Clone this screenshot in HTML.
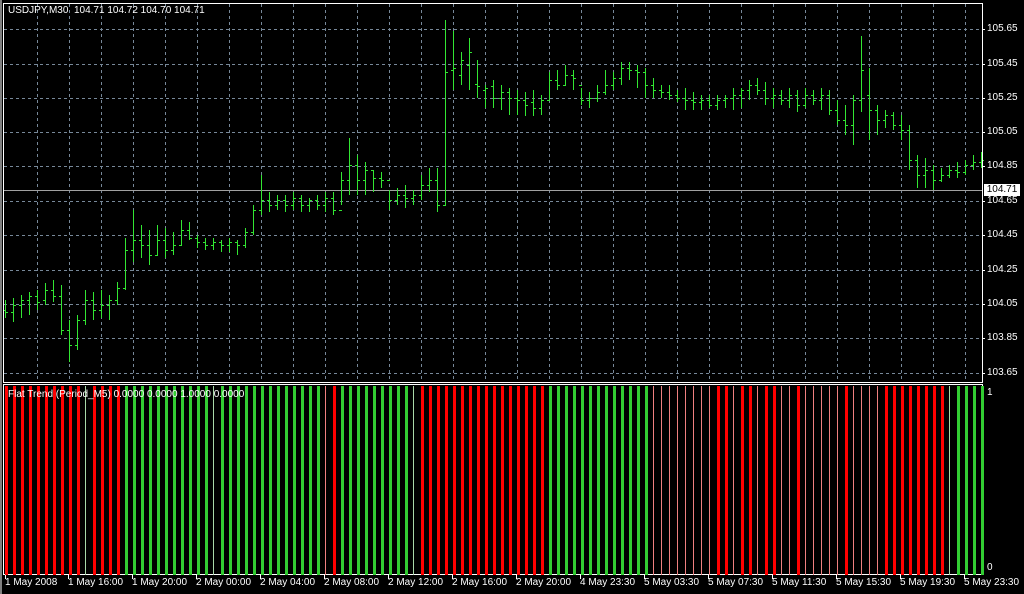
<!DOCTYPE html>
<html><head><meta charset="utf-8"><style>
body{margin:0;width:1024px;height:594px;background:#000;position:relative;overflow:hidden;font-family:"Liberation Sans",sans-serif;font-size:10px;color:#fff}
.a{position:absolute}
.r{position:absolute;top:386px;height:189px}
.R{background:repeating-linear-gradient(90deg,#f00 0 3px,transparent 3px 8px)}
.G{background:repeating-linear-gradient(90deg,#32cd32 0 3px,transparent 3px 8px)}
.P{background:repeating-linear-gradient(90deg,#f08080 0 1px,transparent 1px 8px)}
.T{background:repeating-linear-gradient(90deg,#a8d8a8 0 1px,transparent 1px 8px)}
.pl{position:absolute;left:987px;font-size:10px}
.bl{position:absolute;top:577px;font-size:10px}
</style></head><body>
<div class="a" style="left:0;top:0;width:2px;height:594px;background:#808080"></div>
<svg class="a" style="left:0;top:0" width="1024" height="594">
<g stroke="#778899" stroke-dasharray="3 3" stroke-width="1">
<path d="M37.5 4V382M69.5 4V382M101.5 4V382M133.5 4V382M165.5 4V382M197.5 4V382M229.5 4V382M261.5 4V382M293.5 4V382M325.5 4V382M357.5 4V382M389.5 4V382M421.5 4V382M453.5 4V382M485.5 4V382M517.5 4V382M549.5 4V382M581.5 4V382M613.5 4V382M645.5 4V382M677.5 4V382M709.5 4V382M741.5 4V382M773.5 4V382M805.5 4V382M837.5 4V382M869.5 4V382M901.5 4V382M933.5 4V382M965.5 4V382"/>
<path d="M4 29.5H982M4 64.5H982M4 98.5H982M4 132.5H982M4 166.5H982M4 201.5H982M4 235.5H982M4 270.5H982M4 304.5H982M4 338.5H982M4 373.5H982"/>
</g>
<path d="M4 190.5H982" stroke="#a0a0a0"/>
<g stroke="#32e632" stroke-width="1" fill="none">
<path d="M5.5 300V318M3 310.5h3M6 312.5h2M13.5 298V322M11 312.5h3M14 305.5h2M21.5 295V318M19 305.5h3M22 300.5h2M29.5 292V315M27 300.5h3M30 296.5h2M37.5 290V310M35 296.5h3M38 302.5h2M45.5 283V305M43 300.5h3M46 290.5h2M53.5 280V302M51 290.5h3M54 296.5h2M61.5 285V335M59 296.5h3M62 330.5h2M69.5 320V362M67 330.5h3M70 345.5h2M77.5 315V350M75 345.5h3M78 320.5h2M85.5 290V325M83 320.5h3M86 300.5h2M93.5 292V320M91 300.5h3M94 310.5h2M101.5 290V318M99 310.5h3M102 305.5h2M109.5 295V320M107 305.5h3M110 300.5h2M117.5 282V305M115 300.5h3M118 288.5h2M125.5 238V290M123 288.5h3M126 250.5h2M133.5 210V262M131 250.5h3M134 240.5h2M141.5 225V258M139 240.5h3M142 245.5h2M149.5 230V265M147 245.5h3M150 255.5h2M157.5 225V255M155 255.5h3M158 240.5h2M165.5 228V258M163 240.5h3M166 250.5h2M173.5 232V255M171 250.5h3M174 245.5h2M181.5 220V245M179 245.5h3M182 230.5h2M189.5 222V240M187 230.5h3M190 238.5h2M197.5 235V248M195 238.5h3M198 242.5h2M205.5 238V250M203 242.5h3M206 245.5h2M213.5 238V250M211 245.5h3M214 242.5h2M221.5 240V252M219 242.5h3M222 245.5h2M229.5 238V252M227 245.5h3M230 242.5h2M237.5 240V255M235 242.5h3M238 245.5h2M245.5 228V248M243 245.5h3M246 232.5h2M253.5 205V235M251 232.5h3M254 210.5h2M261.5 175V215M259 210.5h3M262 200.5h2M269.5 192V212M267 200.5h3M270 205.5h2M277.5 195V210M275 205.5h3M278 200.5h2M285.5 195V212M283 200.5h3M286 205.5h2M293.5 192V210M291 205.5h3M294 198.5h2M301.5 195V212M299 198.5h3M302 205.5h2M309.5 198V212M307 205.5h3M310 200.5h2M317.5 195V210M315 200.5h3M318 205.5h2M325.5 192V212M323 205.5h3M326 198.5h2M333.5 192V215M331 198.5h3M334 210.5h2M341.5 172V205M339 210.5h3M342 180.5h2M349.5 138V195M347 180.5h3M350 165.5h2M357.5 155V195M355 165.5h3M358 180.5h2M365.5 162V195M363 180.5h3M366 170.5h2M373.5 170V192M371 170.5h3M374 178.5h2M381.5 172V188M379 178.5h3M382 180.5h2M389.5 190V210M387 180.5h3M390 200.5h2M397.5 188V205M395 200.5h3M398 195.5h2M405.5 185V208M403 195.5h3M406 198.5h2M413.5 190V205M411 198.5h3M414 195.5h2M421.5 175V200M419 195.5h3M422 185.5h2M429.5 168V192M427 185.5h3M430 180.5h2M437.5 168V212M435 180.5h3M438 205.5h2M445.5 20V205M443 205.5h3M446 72.5h2M453.5 31V90M451 70.5h3M454 68.5h2M461.5 52V85M459 75.5h3M462 60.5h2M469.5 38V90M467 65.5h3M470 52.5h2M477.5 60V98M475 84.5h3M478 86.5h2M485.5 85V108M483 90.5h3M486 88.5h2M493.5 80V108M491 86.5h3M494 98.5h2M501.5 85V110M499 98.5h3M502 92.5h2M509.5 88V115M507 92.5h3M510 98.5h2M517.5 90V115M515 98.5h3M518 100.5h2M525.5 92V116M523 100.5h3M526 105.5h2M533.5 90V116M531 102.5h3M534 108.5h2M541.5 95V115M539 108.5h3M542 100.5h2M549.5 72V100M547 100.5h3M550 80.5h2M557.5 70V90M555 80.5h3M558 85.5h2M565.5 65V85M563 85.5h3M566 75.5h2M573.5 70V90M571 75.5h3M574 78.5h2M581.5 88V105M579 85.5h3M582 100.5h2M589.5 92V108M587 100.5h3M590 98.5h2M597.5 85V102M595 98.5h3M598 92.5h2M605.5 70V95M603 92.5h3M606 85.5h2M613.5 72V90M611 85.5h3M614 78.5h2M621.5 62V85M619 78.5h3M622 68.5h2M629.5 62V80M627 68.5h3M630 70.5h2M637.5 65V88M635 70.5h3M638 72.5h2M645.5 68V98M643 72.5h3M646 85.5h2M653.5 78V98M651 85.5h3M654 90.5h2M661.5 85V98M659 90.5h3M662 92.5h2M669.5 85V100M667 92.5h3M670 95.5h2M677.5 90V102M675 95.5h3M678 98.5h2M685.5 88V110M683 98.5h3M686 100.5h2M693.5 92V110M691 100.5h3M694 102.5h2M701.5 95V110M699 102.5h3M702 100.5h2M709.5 95V108M707 100.5h3M710 105.5h2M717.5 95V110M715 105.5h3M718 100.5h2M725.5 95V108M723 100.5h3M726 98.5h2M733.5 88V110M731 98.5h3M734 95.5h2M741.5 88V108M739 95.5h3M742 90.5h2M749.5 80V100M747 90.5h3M750 85.5h2M757.5 78V95M755 85.5h3M758 90.5h2M765.5 82V105M763 90.5h3M766 98.5h2M773.5 88V108M771 98.5h3M774 95.5h2M781.5 90V105M779 95.5h3M782 100.5h2M789.5 88V108M787 100.5h3M790 95.5h2M797.5 90V112M795 95.5h3M798 105.5h2M805.5 88V108M803 105.5h3M806 95.5h2M813.5 90V105M811 95.5h3M814 100.5h2M821.5 88V110M819 100.5h3M822 95.5h2M829.5 90V115M827 95.5h3M830 110.5h2M837.5 100V125M835 110.5h3M838 120.5h2M845.5 105V135M843 120.5h3M846 125.5h2M853.5 95V145M851 125.5h3M854 100.5h2M861.5 36V112M859 100.5h3M862 70.5h2M869.5 68V140M867 95.5h3M870 110.5h2M877.5 105V135M875 110.5h3M878 120.5h2M885.5 110V128M883 120.5h3M886 115.5h2M893.5 112V130M891 115.5h3M894 125.5h2M901.5 115V140M899 125.5h3M902 130.5h2M909.5 125V170M907 130.5h3M910 160.5h2M917.5 155V188M915 160.5h3M918 175.5h2M925.5 158V188M923 175.5h3M926 170.5h2M933.5 165V190M931 170.5h3M934 180.5h2M941.5 168V182M939 180.5h3M942 175.5h2M949.5 165V178M947 175.5h3M950 170.5h2M957.5 162V178M955 170.5h3M958 172.5h2M965.5 160V175M963 172.5h3M966 165.5h2M973.5 155V170M971 165.5h3M974 162.5h2M981.5 152V168M979 162.5h3M982 160.5h2"/>
</g>
<rect x="3.5" y="3.5" width="979" height="379" fill="none" stroke="#fff"/>
<rect x="3.5" y="384.5" width="979" height="190" fill="none" stroke="#fff"/>
<path d="M5.5 575V579M68.5 575V579M132.5 575V579M196.5 575V579M260.5 575V579M324.5 575V579M388.5 575V579M452.5 575V579M516.5 575V579M580.5 575V579M644.5 575V579M708.5 575V579M772.5 575V579M836.5 575V579M900.5 575V579M964.5 575V579" stroke="#fff"/>
<path d="M982 29.5h3M982 64.5h3M982 98.5h3M982 132.5h3M982 166.5h3M982 201.5h3M982 235.5h3M982 270.5h3M982 304.5h3M982 338.5h3M982 373.5h3" stroke="#fff"/>
</svg>
<div class="r R" style="left:5px;width:80px"></div>
<div class="r T" style="left:85px;width:8px"></div>
<div class="r R" style="left:93px;width:32px"></div>
<div class="r G" style="left:125px;width:88px"></div>
<div class="r T" style="left:213px;width:8px"></div>
<div class="r G" style="left:221px;width:104px"></div>
<div class="r P" style="left:325px;width:8px"></div>
<div class="r R" style="left:333px;width:8px"></div>
<div class="r G" style="left:341px;width:72px"></div>
<div class="r T" style="left:413px;width:8px"></div>
<div class="r R" style="left:421px;width:128px"></div>
<div class="r G" style="left:549px;width:104px"></div>
<div class="r P" style="left:653px;width:64px"></div>
<div class="r R" style="left:717px;width:16px"></div>
<div class="r P" style="left:733px;width:8px"></div>
<div class="r R" style="left:741px;width:16px"></div>
<div class="r P" style="left:757px;width:8px"></div>
<div class="r R" style="left:765px;width:16px"></div>
<div class="r P" style="left:781px;width:16px"></div>
<div class="r R" style="left:797px;width:8px"></div>
<div class="r P" style="left:805px;width:40px"></div>
<div class="r R" style="left:845px;width:8px"></div>
<div class="r P" style="left:853px;width:32px"></div>
<div class="r R" style="left:885px;width:64px"></div>
<div class="r T" style="left:949px;width:8px"></div>
<div class="r G" style="left:957px;width:32px;width:27px"></div>
<div class="a" style="left:8px;top:5px">USDJPY,M30&nbsp; 104.71 104.72 104.70 104.71</div>
<div class="a" style="left:8px;top:389px">Flat Trend (Period_M5) 0.0000 0.0000 1.0000 0.0000</div>
<div class="pl" style="top:23px">105.65</div>
<div class="pl" style="top:58px">105.45</div>
<div class="pl" style="top:92px">105.25</div>
<div class="pl" style="top:126px">105.05</div>
<div class="pl" style="top:160px">104.85</div>
<div class="pl" style="top:195px">104.65</div>
<div class="pl" style="top:229px">104.45</div>
<div class="pl" style="top:264px">104.25</div>
<div class="pl" style="top:298px">104.05</div>
<div class="pl" style="top:332px">103.85</div>
<div class="pl" style="top:367px">103.65</div>
<div class="a" style="left:984px;top:184px;width:36px;height:12px;background:#fff;color:#000;font-size:10px;line-height:12px;text-align:center">104.71</div>
<div class="pl" style="top:387px">1</div>
<div class="pl" style="top:562px">0</div>
<div class="bl" style="left:5px">1 May 2008</div>
<div class="bl" style="left:68px">1 May 16:00</div>
<div class="bl" style="left:132px">1 May 20:00</div>
<div class="bl" style="left:196px">2 May 00:00</div>
<div class="bl" style="left:260px">2 May 04:00</div>
<div class="bl" style="left:324px">2 May 08:00</div>
<div class="bl" style="left:388px">2 May 12:00</div>
<div class="bl" style="left:452px">2 May 16:00</div>
<div class="bl" style="left:516px">2 May 20:00</div>
<div class="bl" style="left:580px">4 May 23:30</div>
<div class="bl" style="left:644px">5 May 03:30</div>
<div class="bl" style="left:708px">5 May 07:30</div>
<div class="bl" style="left:772px">5 May 11:30</div>
<div class="bl" style="left:836px">5 May 15:30</div>
<div class="bl" style="left:900px">5 May 19:30</div>
<div class="bl" style="left:964px">5 May 23:30</div>
</body></html>
